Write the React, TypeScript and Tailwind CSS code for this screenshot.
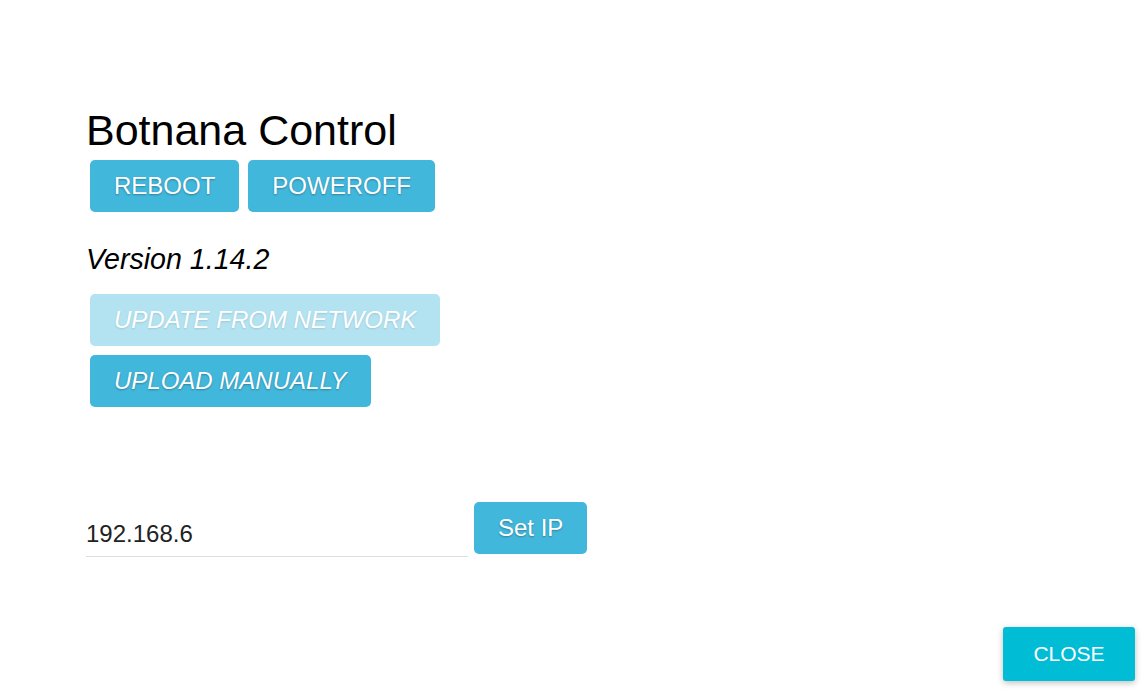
import React from "react";

const btn =
  "h-[52px] px-6 rounded-[5px] text-[24px] leading-none text-white [text-shadow:0_1px_2px_rgba(0,0,0,0.3)]";

export default function App() {
  return (
    <div className="h-[690px] w-full bg-white flex flex-col font-['Liberation_Sans',Arial,sans-serif] text-black">
      <main className="flex-1 pl-[86px] pt-[106px]">
        <h1 className="text-[43px] leading-[48px] font-normal">Botnana Control</h1>

        <div className="flex gap-[9px] pl-1 mt-[6px]">
          <button className={`${btn} bg-[#42b7dc]`}>REBOOT</button>
          <button className={`${btn} bg-[#42b7dc]`}>POWEROFF</button>
        </div>

        <p className="mt-[31px] text-[28.6px] leading-[32px] italic">Version 1.14.2</p>

        <div className="flex flex-col items-start gap-[9px] pl-1 mt-[19px]">
          <button disabled className={`${btn} italic bg-[#b3e2f1] [text-shadow:0_1px_2px_rgba(0,0,0,0.12)]`}>
            UPDATE FROM NETWORK
          </button>
          <button className={`${btn} italic bg-[#42b7dc]`}>UPLOAD MANUALLY</button>
        </div>

        <div className="flex items-start gap-[6px] mt-[95px]">
          <div className="w-[382px] h-[55px] pt-[18px] border-b border-[#dedede]">
            <input
              defaultValue="192.168.6"
              className="w-full text-[24px] leading-[28px] text-[#222] outline-none bg-transparent"
            />
          </div>
          <button className={`${btn} bg-[#42b7dc] px-6`}>Set IP</button>
        </div>
      </main>

      <footer className="flex justify-end pr-[7px] pb-[9px]">
        <button className="h-[54px] w-[132px] rounded-[3px] bg-[#00bcd4] text-white text-[21px] leading-none pb-[2px] shadow-[0_2px_6px_rgba(0,0,0,0.25)]">
          CLOSE
        </button>
      </footer>
    </div>
  );
}
